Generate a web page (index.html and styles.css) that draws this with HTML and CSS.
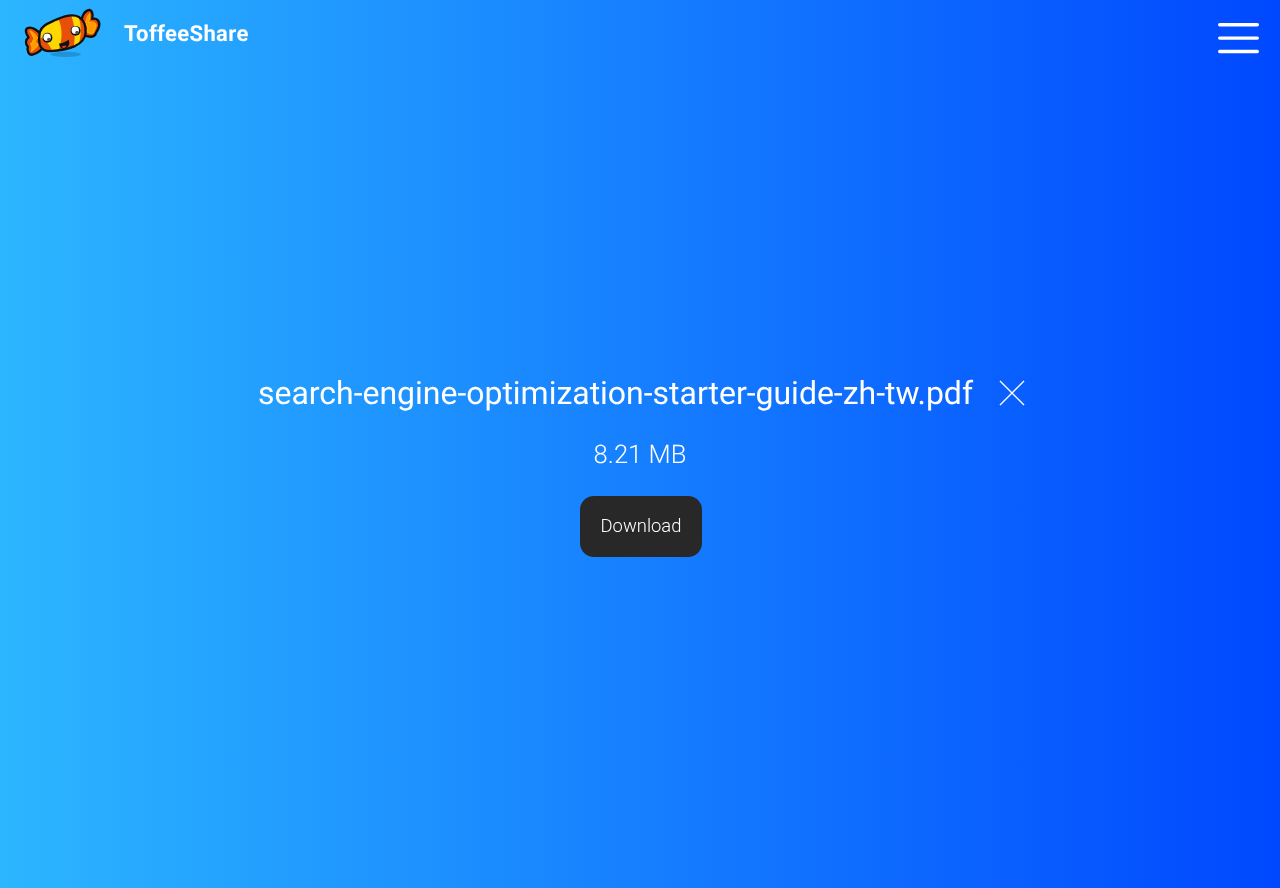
FILE: index.html
```html
<!DOCTYPE html>
<html>
<head>
  <meta charset="UTF-8">
  <title>ToffeeShare</title>
  <link rel="stylesheet" href="styles.css">
</head>
<body>
  <header class="top-bar">
    <a class="brand" href="#">
      <svg class="brand-logo" viewBox="40 20 240 160" xmlns="http://www.w3.org/2000/svg">
        <ellipse cx="168" cy="163" rx="46" ry="8" fill="#1c86c8" opacity="0.7"/>
        <!-- left wrapper -->
        <path d="M96 106 C84 90 66 78 52 84 C44 90 50 104 56 112 C46 118 46 132 54 140 C50 150 56 166 68 164 C82 160 96 150 104 136 Z" fill="#e8500a" stroke="#111" stroke-width="7" stroke-linejoin="round"/>
        <path d="M60 92 C70 96 78 104 84 114 L76 124 L86 134 C78 144 72 150 64 154 C68 144 66 138 62 132 C68 126 70 120 72 114 C68 106 64 100 60 92 Z" fill="#ff9a00" stroke="#ffc400" stroke-width="2.5" stroke-linejoin="round"/>
        <!-- right wrapper -->
        <path d="M214 72 C214 52 224 30 240 29 C250 32 250 46 248 56 C262 52 272 62 269 78 C268 84 264 90 260 98 C256 112 238 114 218 102 Z" fill="#e8500a" stroke="#111" stroke-width="7" stroke-linejoin="round"/>
        <path d="M228 68 C230 56 234 46 240 40 C243 48 240 58 237 68 C248 62 260 66 260 76 C259 84 254 90 252 98 C246 102 238 100 230 94 C236 88 234 78 228 68 Z" fill="#ff9a00" stroke="#ffc400" stroke-width="2.5" stroke-linejoin="round"/>
        <!-- body -->
        <path d="M90 96 C96 74 120 68 140 58 C162 48 190 40 208 50 C224 60 230 80 228 100 C226 120 212 130 196 138 C172 148 146 152 122 153 C104 153 94 146 90 134 C87 122 87 108 90 96 Z" fill="#ffd800"/>
        <path d="M146 56 C160 50 172 46 184 44 C196 72 198 112 192 142 C178 148 162 151 146 152 C158 122 160 86 146 56 Z" fill="#e8500a"/>
        <path d="M206 48 C224 58 230 80 228 100 C226 114 220 122 208 131 C216 102 216 74 206 48 Z" fill="#e8500a"/>
        <path d="M88 110 C104 116 120 134 128 153 C104 153 94 146 90 134 C88 126 88 118 88 110 Z" fill="#e8500a"/>
        <path d="M90 96 C96 74 120 68 140 58 C162 48 190 40 208 50 C224 60 230 80 228 100 C226 120 212 130 196 138 C172 148 146 152 122 153 C104 153 94 146 90 134 C87 122 87 108 90 96 Z" fill="none" stroke="#111" stroke-width="7"/>
        <!-- face -->
        <circle cx="113" cy="113" r="15" fill="#111"/>
        <circle cx="112" cy="111" r="11" fill="#fff"/>
        <circle cx="117" cy="118" r="5" fill="#555"/>
        <circle cx="198" cy="92" r="15" fill="#111"/>
        <circle cx="197" cy="90" r="11" fill="#fff"/>
        <circle cx="202" cy="97" r="5" fill="#555"/>
        <path d="M148 130 C156 130 168 126 177 119 C182 130 178 142 166 146 C156 149 149 140 148 130 Z" fill="#111"/>
        <path d="M156 140 C160 136 167 136 171 138 C168 144 160 146 156 140 Z" fill="#e23b2e"/>
      </svg>
      <span class="brand-name">ToffeeShare</span>
    </a>
    <button class="menu-btn" aria-label="Menu">
      <svg class="menu-icon" viewBox="0 0 41 31" xmlns="http://www.w3.org/2000/svg">
        <rect x="0" y="0" width="41" height="3.4" rx="1.7" fill="#fff"/>
        <rect x="0" y="13.4" width="41" height="3.4" rx="1.7" fill="#fff"/>
        <rect x="0" y="26.8" width="41" height="3.4" rx="1.7" fill="#fff"/>
      </svg>
    </button>
  </header>

  <main class="download">
    <div class="file-row">
      <h1 class="file-name">search-engine-optimization-starter-guide-zh-tw.pdf</h1>
      <svg class="close-icon" viewBox="0 0 26 26" xmlns="http://www.w3.org/2000/svg">
        <path d="M1 1 L25 25 M25 1 L1 25" stroke="#fff" stroke-width="1.4" fill="none"/>
      </svg>
    </div>
    <p class="file-size">8.21 MB</p>
    <button class="download-btn">Download</button>
  </main>
</body>
</html>
```

FILE: styles.css
```css
body {
  font-family: Roboto, sans-serif;
  text-rendering: geometricPrecision;
  background: linear-gradient(to right, #2cb6ff, #0048ff);
  color: white;
  display: flex;
  flex-direction: column;
  height: 100vh;
  margin: 0;
  overflow: hidden;
}

.top-bar {
  display: flex;
  justify-content: space-between;
  align-items: flex-start;
  height: 66px;
  padding: 7px 21px 0 23px;
  box-sizing: border-box;
  will-change: transform;
}

.brand {
  display: flex;
  align-items: flex-start;
  color: white;
  text-decoration: none;
}

.brand-logo {
  width: 80px;
  height: 53px;
}

.brand-name {
  margin: 14px 0 0 21px;
  font-size: 22px;
  line-height: 28px;
  font-weight: 700;
  letter-spacing: 0.35px;
}

.menu-btn {
  margin-top: 16px;
  padding: 0;
  background: none;
  border: none;
  cursor: pointer;
}

.menu-icon {
  display: block;
  width: 41px;
  height: 31px;
}

.download {
  display: flex;
  flex-direction: column;
  align-items: center;
  margin-top: 304px;
  will-change: transform;
}

.file-row {
  display: flex;
  align-items: center;
  gap: 26px;
  margin-left: 3px;
}

.file-name {
  margin: 0;
  font-size: 32px;
  line-height: 46px;
  font-weight: 400;
  letter-spacing: -0.02px;
}

.close-icon {
  width: 26px;
  height: 26px;
}

.file-size {
  margin: 24px 0 0;
  font-size: 25.6px;
  line-height: 30px;
  font-weight: 300;
}

.download-btn {
  margin: 26px 0 0 2px;
  width: 122px;
  height: 61px;
  padding: 0 0 2px;
  background-color: #282828;
  border: none;
  border-radius: 14px;
  color: white;
  font-family: Roboto, sans-serif;
  font-size: 18.4px;
  font-weight: 300;
  cursor: pointer;
}
```
